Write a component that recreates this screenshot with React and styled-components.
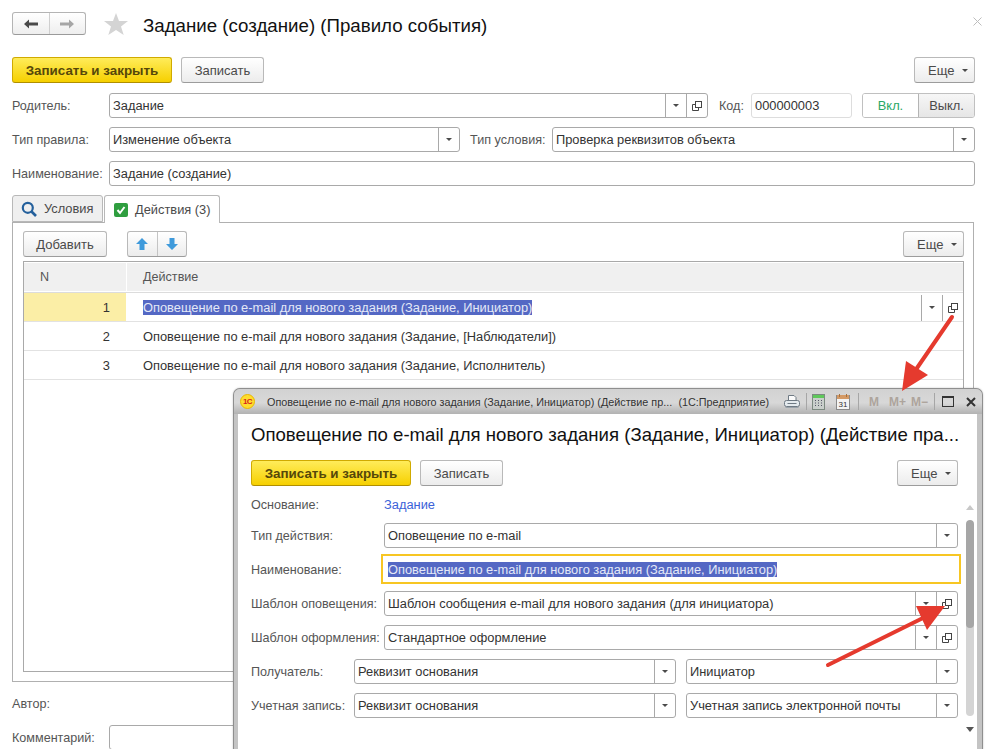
import React from 'react';
import styled, { createGlobalStyle } from 'styled-components';

const Global = createGlobalStyle`
  html, body { margin: 0; padding: 0; background: #fff; }
  body { font-family: "Liberation Sans", Arial, sans-serif; font-size: 13px; color: #4a4a4a; }
  * { box-sizing: border-box; }
`;

const Page = styled.div`
  position: relative;
  width: 994px;
  height: 749px;
  overflow: hidden;
  background: #fff;
`;
const MainForm = styled.div`
  padding: 12px 19px 0 12px;
  display: flex;
  flex-direction: column;
`;
const Header = styled.div`
  display: flex;
  align-items: center;
  height: 23px;
  margin-bottom: 22px;
`;
const NavGroup = styled.div`
  display: flex;
  width: 74px;
  height: 23px;
  border: 1px solid #b4b4b4;
  border-bottom-color: #9a9a9a;
  border-radius: 3px;
  background: linear-gradient(#fff, #eeeeee);
`;
const NavBtn = styled.div`
  flex: 1;
  display: flex;
  align-items: center;
  justify-content: center;
  & + & { border-left: 1px solid #cfcfcf; }
`;
const StarWrap = styled.div`
  margin-left: 18px;
  width: 24px;
  height: 24px;
`;
const Title = styled.div`
  margin-left: 15px;
  padding-top: 4px;
  font-size: 18.7px;
  color: #111;
  white-space: nowrap;
`;
const CloseX = styled.div`
  margin-left: auto;
  margin-right: -7px;
  margin-top: -5px;
  width: 9px;
  height: 9px;
  display: flex;
`;
const Toolbar = styled.div`
  display: flex;
  align-items: center;
  gap: 9px;
  height: 26px;
`;
const Button = styled.div`
  height: 26px;
  width: ${p => p.$w}px;
  display: flex;
  align-items: center;
  justify-content: center;
  border: 1px solid #b9b9b9;
  border-bottom-color: #9c9c9c;
  border-radius: 3px;
  background: linear-gradient(#fff, #ececec);
  color: #4a4a4a;
  white-space: nowrap;
  font-size: 13px;
`;
const PrimaryButton = styled(Button)`
  background: linear-gradient(#ffec5a, #f6d000);
  border-color: #d0aa00;
  border-bottom-color: #b08f00;
  color: #55470a;
  font-weight: bold;
  font-size: 13.4px;
`;
const MoreButton = styled(Button)`
  width: 61px;
  margin-left: auto;
  justify-content: flex-start;
  gap: 8px;
  padding-left: 13px;
`;
const ArrowGroup = styled.div`
  display: flex;
  margin-left: 11px;
  width: 60px;
  height: 26px;
  border: 1px solid #b9b9b9;
  border-bottom-color: #9c9c9c;
  border-radius: 3px;
  background: linear-gradient(#fff, #ececec);
`;
const ArrowBtn = styled.div`
  flex: 1;
  display: flex;
  align-items: center;
  justify-content: center;
  & + & { border-left: 1px solid #c4c4c4; }
`;
const Caret = styled.span`
  display: inline-block;
  width: 0;
  height: 0;
  border-left: 3px solid transparent;
  border-right: 3px solid transparent;
  border-top: 3px solid #4a4a4a;
`;
const Rows = styled.div`
  display: flex;
  flex-direction: column;
  gap: 9px;
  margin-top: 10px;
`;
const Row = styled.div`
  display: flex;
  align-items: center;
  height: 25px;
`;
const Label = styled.div`
  width: ${p => p.$w}px;
  flex: none;
  margin-left: ${p => p.$ml || 0}px;
  color: #555;
  white-space: nowrap;
  font-size: 12.6px;
`;
const Field = styled.div`
  display: flex;
  align-items: stretch;
  height: 25px;
  width: ${p => (p.$w ? `${p.$w}px` : 'auto')};
  flex: ${p => (p.$w ? 'none' : '1')};
  margin-left: ${p => p.$ml || 0}px;
  border: 1px solid ${p => (p.$soft ? '#dddddd' : '#a9a9a9')};
  border-radius: 3px;
  background: #fff;
`;
const FieldText = styled.div`
  flex: 1;
  min-width: 0;
  padding-left: 3px;
  display: flex;
  align-items: center;
  color: #333;
  white-space: nowrap;
  font-size: 12.85px;
`;
const FieldBtn = styled.div`
  flex: none;
  width: 21px;
  display: flex;
  align-items: center;
  justify-content: center;
  border-left: 1px solid #a9a9a9;
`;
const Toggle = styled.div`
  display: flex;
  margin-left: 10px;
  width: 113px;
  height: 25px;
  border: 1px solid #c0c0c0;
  border-radius: 3px;
  overflow: hidden;
`;
const ToggleItem = styled.div`
  flex: 1;
  display: flex;
  align-items: center;
  justify-content: center;
  font-size: 12.85px;
  color: ${p => (p.$on ? '#2aa866' : '#4a4a4a')};
  background: ${p => (p.$active ? 'linear-gradient(#f6f6f6, #e6e6e6)' : '#fff')};
  & + & { border-left: 1px solid #b4b4b4; }
`;
const Tabs = styled.div`
  display: flex;
  gap: 1px;
  height: 27px;
  margin-top: 9px;
  position: relative;
  z-index: 1;
`;
const Tab = styled.div`
  display: flex;
  align-items: center;
  gap: 7px;
  width: ${p => p.$w}px;
  height: ${p => (p.$active ? 28 : 27)}px;
  padding-left: ${p => (p.$active ? 9 : 8)}px;
  border: 1px solid #b8b8b8;
  border-bottom: ${p => (p.$active ? 'none' : '1px solid #b8b8b8')};
  border-radius: 3px 3px 0 0;
  background: ${p => (p.$active ? '#fff' : '#efefef')};
  color: #4a4a4a;
  font-size: 12.85px;
`;
const TabPanel = styled.div`
  height: 460px;
  margin-right: 1px;
  border: 1px solid #b0b0b0;
  padding: 8px 9px 9px 10px;
  display: flex;
  flex-direction: column;
`;
const Table = styled.div`
  flex: 1;
  margin-top: 4px;
  border: 1px solid #a9a9a9;
  padding-top: 1px;
`;
const TableHead = styled.div`
  display: grid;
  grid-template-columns: 102px 1fr;
  height: 30px;
  gap: 1px;
  border-bottom: 1px solid #dcdcdc;
  padding-bottom: 1px;
  background: #fff;
`;
const HeadCell = styled.div`
  background: #f0f0f0;
  display: flex;
  align-items: center;
  padding-left: 16px;
  color: #555;
  font-size: 12.6px;
`;
const TableRow = styled.div`
  display: grid;
  grid-template-columns: 102px 1fr;
  height: 29px;
  gap: 1px;
  border-bottom: 1px solid #e2e2e2;
`;
const NumCell = styled.div`
  display: flex;
  align-items: center;
  justify-content: flex-end;
  padding: 1px 16px 0 0;
  color: #333;
  font-size: 12.85px;
  background: ${p => (p.$current ? '#fbeea6' : 'transparent')};
`;
const TextCell = styled.div`
  display: flex;
  align-items: center;
  padding: 1px 0 0 16px;
  color: #333;
  font-size: 12.85px;
  white-space: nowrap;
`;
const Selected = styled.span`
  background: #5468c4;
  color: #e4e8f7;
  line-height: 15px;
`;
const CellBtn = styled.div`
  flex: none;
  width: 21px;
  height: 26px;
  display: flex;
  align-items: center;
  justify-content: center;
  border-left: 1px solid #a9a9a9;
  &:first-of-type { margin-left: auto; }
`;
const Footer = styled.div`
  display: flex;
  flex-direction: column;
  gap: 11px;
  margin-top: 12px;
`;
const FooterRow = styled.div`
  display: flex;
  align-items: center;
  height: ${p => p.$h}px;
`;

/* окно поверх формы */
const Window = styled.div`
  position: absolute;
  left: 233px;
  top: 388px;
  width: 750px;
  height: 380px;
  border: 1px solid #8f8f8f;
  border-bottom: none;
  border-radius: 7px 7px 0 0;
  background: #c4c4c4;
  padding: 0 5px 0 4px;
  display: flex;
  flex-direction: column;
  box-shadow: 0 0 2px rgba(0,0,0,.25);
`;
const TitleBar = styled.div`
  height: 25px;
  margin: 0 -5px 0 -4px;
  padding: 0 11px 0 6px;
  flex: none;
  display: flex;
  align-items: center;
  border-radius: 6px 6px 0 0;
  background: linear-gradient(#d2d2d2, #d8d8d8 55%, #b2b2b2);
`;
const Logo1C = styled.div`
  width: 15px;
  height: 15px;
  border-radius: 50%;
  background: #ffdc2e;
  border: 1px solid #e8b800;
  color: #d6231c;
  font-size: 8px;
  font-weight: bold;
  letter-spacing: -0.5px;
  display: flex;
  align-items: center;
  justify-content: center;
  margin-right: 12px;
  flex: none;
`;
const WinTitle = styled.div`
  flex: none;
  width: 502px;
  display: flex;
  justify-content: space-between;
  font-size: 10.8px;
  color: #333;
  white-space: nowrap;
`;
const TitleIcons = styled.div`
  display: flex;
  align-items: center;
  flex: 1;
  margin-left: 15px;
`;
const TitleIcon = styled.span`
  display: flex;
  margin-left: ${p => p.$ml || 0}px;
`;
const TitleSep = styled.div`
  width: 1px;
  height: 17px;
  background: #a6a6a6;
  margin: ${p => p.$m};
`;
const MemKey = styled.span`
  font-size: 12px;
  font-weight: bold;
  color: #ada49c;
  margin-left: ${p => p.$ml}px;
`;
const WinBody = styled.div`
  flex: 1;
  background: #fff;
  display: flex;
  flex-direction: column;
  padding-left: 13px;
`;
const WinHeading = styled.div`
  height: 46px;
  padding-top: 10px;
  font-size: 18.6px;
  color: #111;
  white-space: nowrap;
`;
const WinToolbar = styled(Toolbar)`
  padding-right: 19px;
`;
const WinLower = styled.div`
  display: flex;
  margin-top: 9px;
`;
const WinFields = styled.div`
  width: 707px;
  flex: none;
  display: flex;
  flex-direction: column;
  gap: 9px;
`;
const BasisRow = styled.div`
  display: flex;
  align-items: center;
  height: 19px;
`;
const Link = styled.div`
  color: #3b62d8;
  font-size: 12.85px;
`;
const FocusField = styled(Field)`
  height: 30px;
  margin: -3px -3px -2px -3px;
  border: 2px solid #f7c623;
  border-radius: 0;
`;
const FocusText = styled(FieldText)`
  padding-left: 5px;
`;
const ScrollCol = styled.div`
  flex: none;
  width: 8px;
  margin-left: 8px;
  display: flex;
  flex-direction: column;
  align-items: center;
`;
const ScrollTrack = styled.div`
  width: 8px;
  height: 196px;
  margin: 10px 0 11px;
  border-radius: 4px;
  background: #d4d4d4;
  overflow: hidden;
`;
const ScrollThumb = styled.div`
  width: 8px;
  height: 108px;
  border-radius: 4px;
  background: #a6a6a6;
`;
const ScrollUp = styled.span`
  width: 0;
  height: 0;
  margin-top: 10px;
  border-left: 4px solid transparent;
  border-right: 4px solid transparent;
  border-bottom: 5px solid #c8c8c8;
`;
const ScrollDown = styled.span`
  width: 0;
  height: 0;
  border-left: 4px solid transparent;
  border-right: 4px solid transparent;
  border-top: 5px solid #555;
`;
const ArrowsLayer = styled.svg`
  position: absolute;
  left: 0;
  top: 0;
  pointer-events: none;
`;

const OpenIcon = () => (
  <svg width="10" height="10" viewBox="0 0 10 10" fill="none" stroke="#444" strokeWidth="1">
    <rect x="3.5" y="0.5" width="6" height="6" fill="#fff" />
    <path d="M3.5 3.5H0.5V9.5H6.5V6.5" />
  </svg>
);

const SelectField = ({ w, ml, text, open }) => (
  <Field $w={w} $ml={ml}>
    <FieldText>{text}</FieldText>
    <FieldBtn><Caret /></FieldBtn>
    {open && <FieldBtn><OpenIcon /></FieldBtn>}
  </Field>
);

const Printer = () => (
  <svg width="16" height="15" viewBox="0 0 16 15" fill="none" stroke="#6f7a84">
    <path d="M4.5 6.5V1.5H10l2 2v3" fill="#fbfbfb" />
    <rect x="0.5" y="6.5" width="15" height="6" rx="2" fill="#e4eaee" />
    <path d="M3.500 9.500h9" />
    <path d="M1.500 13.500h13" stroke="#9aa3ab" />
  </svg>
);
const Calc = () => (
  <svg width="13" height="16" viewBox="0 0 13 16">
    <rect x="0.5" y="0.5" width="12" height="15" fill="#c9cfcb" stroke="#7c8a80" />
    <rect x="1" y="1" width="11" height="3" fill="#5fc85a" />
    <path d="M3 6h1v1H3zM6 6h1v1H6zM9 6h1v1H9zM3 8.500h1v1H3zM6 8.500h1v1H6zM9 8.500h1v1H9zM3 11h1v1H3zM6 11h1v1H6zM9 11h1v1H9z" fill="#556" />
  </svg>
);
const Calendar = () => (
  <svg width="14" height="16" viewBox="0 0 14 16">
    <rect x="0.500" y="1.500" width="13" height="14" fill="#f4f4f4" stroke="#8a8a8a" />
    <rect x="1" y="1" width="12" height="4" fill="#d49a66" />
    <path d="M3.500 0v3M10.500 0v3" stroke="#a5703f" />
    <text x="7" y="13" fontSize="8" textAnchor="middle" fill="#333" fontFamily="Liberation Sans">31</text>
  </svg>
);

const TableRowItem = ({ n, text, current }) => (
  <TableRow>
    <NumCell $current={current}>{n}</NumCell>
    <TextCell>
      {current ? <Selected>{text}</Selected> : text}
      {current && <CellBtn><Caret /></CellBtn>}
      {current && <CellBtn><OpenIcon /></CellBtn>}
    </TextCell>
  </TableRow>
);

export default function App() {
  return (
    <Page>
      <Global />
      <MainForm>
        <Header>
          <NavGroup>
            <NavBtn>
              <svg width="14" height="10" viewBox="0 0 14 10"><path d="M0 5L5 0.500V3.500H14V6.500H5V9.500Z" fill="#4a4a4a" /></svg>
            </NavBtn>
            <NavBtn>
              <svg width="14" height="10" viewBox="0 0 14 10"><path d="M14 5L9 0.500V3.500H0V6.500H9V9.500Z" fill="#a6a6a6" /></svg>
            </NavBtn>
          </NavGroup>
          <StarWrap>
            <svg width="24" height="24" viewBox="0 0 24 24"><path d="M12 1l3 8h9l-7 5.500 2.700 8.500L12 18l-7.700 5L7 14.500 0 9h9z" fill="#d4d4d4" /></svg>
          </StarWrap>
          <Title>Задание (создание) (Правило события)</Title>
          <CloseX>
            <svg width="9" height="9" viewBox="0 0 9 9"><path d="M0.500 0.500l8 8M8.500 0.500l-8 8" stroke="#bdbdbd" /></svg>
          </CloseX>
        </Header>
        <Toolbar>
          <PrimaryButton $w={160}>Записать и закрыть</PrimaryButton>
          <Button $w={83}>Записать</Button>
          <MoreButton>Еще <Caret /></MoreButton>
        </Toolbar>
        <Rows>
          <Row>
            <Label $w={97}>Родитель:</Label>
            <SelectField w={599} text="Задание" open />
            <Label $w={32} $ml={11}>Код:</Label>
            <Field $w={101} $soft><FieldText>000000003</FieldText></Field>
            <Toggle>
              <ToggleItem $on>Вкл.</ToggleItem>
              <ToggleItem $active>Выкл.</ToggleItem>
            </Toggle>
          </Row>
          <Row>
            <Label $w={97}>Тип правила:</Label>
            <SelectField w={351} text="Изменение объекта" />
            <Label $w={82} $ml={10}>Тип условия:</Label>
            <SelectField w={423} text="Проверка реквизитов объекта" />
          </Row>
          <Row>
            <Label $w={97}>Наименование:</Label>
            <Field><FieldText>Задание (создание)</FieldText></Field>
          </Row>
        </Rows>
        <Tabs>
          <Tab $w={91}>
            <svg width="16" height="16" viewBox="0 0 16 16" fill="none" stroke="#24609c" strokeWidth="2.200">
              <circle cx="6.800" cy="6.800" r="5" />
              <path d="M10.500 10.500L15 15" strokeWidth="2.600" />
            </svg>
            Условия
          </Tab>
          <Tab $w={116} $active>
            <svg width="14" height="14" viewBox="0 0 14 14">
              <rect width="14" height="14" rx="2" fill="#2f9e3f" />
              <path d="M3.500 7l2.500 3 4.500-6" fill="none" stroke="#fff" strokeWidth="2" />
            </svg>
            Действия (3)
          </Tab>
        </Tabs>
        <TabPanel>
          <Toolbar>
            <Button $w={84}>Добавить</Button>
            <ArrowGroup>
              <ArrowBtn>
                <svg width="12" height="12" viewBox="0 0 12 12"><path d="M6 0l6 6H8.500v6h-5V6H0z" fill="#3f9adb" /></svg>
              </ArrowBtn>
              <ArrowBtn>
                <svg width="12" height="12" viewBox="0 0 12 12"><path d="M6 12l6-6H8.500V0h-5v6H0z" fill="#3f9adb" /></svg>
              </ArrowBtn>
            </ArrowGroup>
            <MoreButton>Еще <Caret /></MoreButton>
          </Toolbar>
          <Table>
            <TableHead>
              <HeadCell>N</HeadCell>
              <HeadCell>Действие</HeadCell>
            </TableHead>
            <TableRowItem n="1" current text="Оповещение по e-mail для нового задания (Задание, Инициатор)" />
            <TableRowItem n="2" text="Оповещение по e-mail для нового задания (Задание, [Наблюдатели])" />
            <TableRowItem n="3" text="Оповещение по e-mail для нового задания (Задание, Исполнитель)" />
          </Table>
        </TabPanel>
        <Footer>
          <FooterRow $h={20}><Label $w={97}>Автор:</Label></FooterRow>
          <FooterRow $h={25}>
            <Label $w={97}>Комментарий:</Label>
            <Field><FieldText /></Field>
          </FooterRow>
        </Footer>
      </MainForm>

      <Window>
        <TitleBar>
          <Logo1C>1С</Logo1C>
          <WinTitle>
            <span>Оповещение по e-mail для нового задания (Задание, Инициатор) (Действие пр...</span>
            <span>(1С:Предприятие)</span>
          </WinTitle>
          <TitleIcons>
            <Printer />
            <TitleSep $m="0 5px 0 6px" />
            <Calc />
            <TitleIcon $ml={11}><Calendar /></TitleIcon>
            <TitleSep $m="0 0 0 8px" />
            <MemKey $ml={10}>M</MemKey>
            <MemKey $ml={10}>M+</MemKey>
            <MemKey $ml={5}>M−</MemKey>
            <TitleSep $m="0 0 0 6px" />
            <TitleIcon $ml={7}>
              <svg width="12" height="11" viewBox="0 0 12 11">
                <rect x="0.500" y="0.500" width="11" height="10" fill="none" stroke="#333" />
                <rect x="0" y="0" width="12" height="2" fill="#333" />
              </svg>
            </TitleIcon>
            <TitleIcon $ml={12}>
              <svg width="10" height="10" viewBox="0 0 10 10">
                <path d="M1 1l8 8M9 1l-8 8" stroke="#333" strokeWidth="2" />
              </svg>
            </TitleIcon>
          </TitleIcons>
        </TitleBar>
        <WinBody>
          <WinHeading>Оповещение по e-mail для нового задания (Задание, Инициатор) (Действие пра...</WinHeading>
          <WinToolbar>
            <PrimaryButton $w={160}>Записать и закрыть</PrimaryButton>
            <Button $w={83}>Записать</Button>
            <MoreButton>Еще <Caret /></MoreButton>
          </WinToolbar>
          <WinLower>
            <WinFields>
              <BasisRow>
                <Label $w={133}>Основание:</Label>
                <Link>Задание</Link>
              </BasisRow>
              <Row>
                <Label $w={133}>Тип действия:</Label>
                <SelectField w={574} text="Оповещение по e-mail" />
              </Row>
              <Row>
                <Label $w={133}>Наименование:</Label>
                <FocusField>
                  <FocusText><Selected>Оповещение по e-mail для нового задания (Задание, Инициатор)</Selected></FocusText>
                </FocusField>
              </Row>
              <Row>
                <Label $w={133}>Шаблон оповещения:</Label>
                <SelectField w={574} open text="Шаблон сообщения e-mail для нового задания (для инициатора)" />
              </Row>
              <Row>
                <Label $w={133}>Шаблон оформления:</Label>
                <SelectField w={574} open text="Стандартное оформление" />
              </Row>
              <Row>
                <Label $w={103}>Получатель:</Label>
                <SelectField w={322} text="Реквизит основания" />
                <SelectField w={272} ml={10} text="Инициатор" />
              </Row>
              <Row>
                <Label $w={103}>Учетная запись:</Label>
                <SelectField w={322} text="Реквизит основания" />
                <SelectField w={272} ml={10} text="Учетная запись электронной почты" />
              </Row>
            </WinFields>
            <ScrollCol>
              <ScrollUp />
              <ScrollTrack><ScrollThumb /></ScrollTrack>
              <ScrollDown />
            </ScrollCol>
          </WinLower>
        </WinBody>
      </Window>

      <ArrowsLayer width="994" height="749" viewBox="0 0 994 749">
        <path d="M952 317L917 368" stroke="#e53a2e" strokeWidth="4" strokeLinecap="round" />
        <path d="M902 391L906 361L928 375Z" fill="#e53a2e" />
        <path d="M828 665L925 617" stroke="#e53a2e" strokeWidth="4" strokeLinecap="round" />
        <path d="M945 606L916 606L927 630Z" fill="#e53a2e" />
      </ArrowsLayer>
    </Page>
  );
}
